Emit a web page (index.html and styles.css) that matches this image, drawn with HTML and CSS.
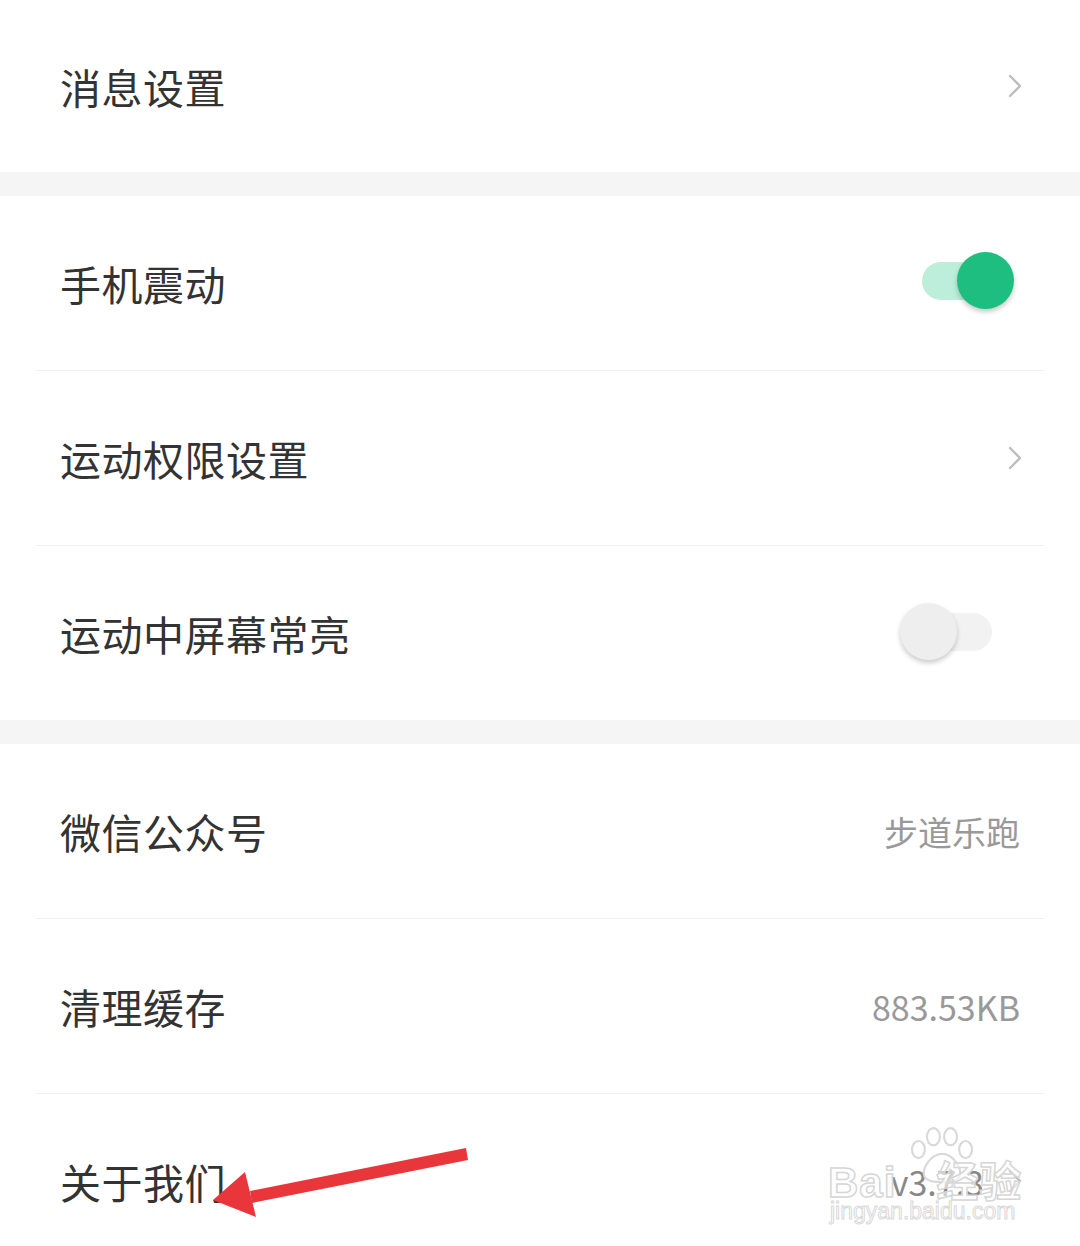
FILE: index.html
```html
<!DOCTYPE html>
<html lang="zh-CN">
<head>
  <meta charset="UTF-8">
  <meta name="viewport" content="width=device-width, initial-scale=1.0">
  <title>设置</title>
  <link rel="stylesheet" href="styles.css">
</head>
<body>

  <!-- 第一组 -->
  <div class="group">
    <div class="row row-first">
      <span class="label">消息设置</span>
      <svg class="chevron" viewBox="0 0 14 24"><path d="M2 2 L12 12 L2 22"/></svg>
    </div>
  </div>

  <div class="gap"></div>

  <!-- 第二组 -->
  <div class="group">
    <div class="row">
      <span class="label">手机震动</span>
      <div class="switch on"><span class="track"></span><span class="knob"></span></div>
    </div>
    <div class="row">
      <span class="label">运动权限设置</span>
      <svg class="chevron" viewBox="0 0 14 24"><path d="M2 2 L12 12 L2 22"/></svg>
    </div>
    <div class="row">
      <span class="label">运动中屏幕常亮</span>
      <div class="switch off"><span class="track"></span><span class="knob"></span></div>
    </div>
  </div>

  <div class="gap"></div>

  <!-- 第三组 -->
  <div class="group">
    <div class="row">
      <span class="label">微信公众号</span>
      <span class="value">步道乐跑</span>
    </div>
    <div class="row">
      <span class="label">清理缓存</span>
      <span class="value">883.53KB</span>
    </div>
    <div class="row">
      <span class="label">关于我们</span>
      <span class="value version">v3.7.3</span>
      <svg class="chevron" viewBox="0 0 14 24"><path d="M2 2 L12 12 L2 22"/></svg>
    </div>
  </div>

  <!-- 标注箭头 -->
  <svg class="arrow" width="1080" height="1246" viewBox="0 0 1080 1246">
    <path d="M466 1148 L468 1160 L252 1203 L250 1191 Z" fill="#e9363b"/>
    <path d="M213 1200 L245 1172 L256 1217 Z" fill="#e9363b"/>
  </svg>

  <!-- 水印 -->
  <div class="watermark">
    <svg class="paw" width="72" height="60" viewBox="0 0 64 56">
      <ellipse cx="10" cy="22" rx="6" ry="8"/>
      <ellipse cx="24" cy="10" rx="6" ry="8"/>
      <ellipse cx="40" cy="10" rx="6" ry="8"/>
      <ellipse cx="54" cy="22" rx="6" ry="8"/>
      <path d="M32 26 C22 26 12 40 16 48 C20 54 44 54 48 48 C52 40 42 26 32 26 Z"/>
    </svg>
    <div class="wm-top">Bai<span class="wm-gap"></span>经验</div>
    <div class="wm-url">jingyan.baidu.com</div>
  </div>

</body>
</html>
```

FILE: styles.css
```css
body {
  margin: 0;
  background: #fff;
  font-family: "Noto Sans CJK SC", "Noto Sans", sans-serif;
  color: #333;
  position: relative;
  height: 1246px;
  overflow: hidden;
}

.group {
  background: #fff;
}

.row {
  display: flex;
  align-items: center;
  height: 174px;
  padding: 0 58px 0 60px;
  position: relative;
}

.row + .row {
  border-top: 1px solid #f0f0f0;
  margin: 0 36px;
  padding: 0 22px 0 24px;
}

.row-first {
  height: 172px;
}

.label {
  flex: 1;
  font-size: 41px;
  letter-spacing: 0.5px;
  color: #333;
}

.value {
  font-size: 34px;
  color: #999;
  margin-right: 2px;
}

.version {
  color: #888;
  margin-right: 24px;
}

.chevron {
  width: 14px;
  height: 24px;
  fill: none;
  stroke: #bdbdbd;
  stroke-width: 2.4;
  stroke-linecap: round;
  stroke-linejoin: round;
}

.gap {
  height: 24px;
  background: #f5f5f5;
}

/* 开关 */
.switch {
  position: relative;
  width: 92px;
  height: 58px;
}

.switch .track {
  position: absolute;
  top: 10px;
  height: 38px;
  border-radius: 19px;
}

.switch .knob {
  position: absolute;
  top: 0;
  width: 57px;
  height: 57px;
  border-radius: 50%;
}

.switch.on {
  margin-right: 8px;
  margin-top: -4px;
}

.switch.on .track {
  left: 0;
  width: 70px;
  background: #bdeedb;
}

.switch.on .knob {
  right: 0;
  background: #1dbe7f;
  box-shadow: 0 3px 5px rgba(0, 0, 0, 0.22);
}

.switch.off {
  margin-right: 30px;
  margin-top: -2px;
}

.switch.off .track {
  right: 0;
  width: 70px;
  background: #f2f2f2;
}

.switch.off .knob {
  left: 0;
  background: #eeeeee;
  box-shadow: 0 3px 5px rgba(0, 0, 0, 0.2);
}

/* 箭头和水印 */
.arrow {
  position: absolute;
  left: 0;
  top: 0;
  pointer-events: none;
}

.watermark {
  position: absolute;
  left: 828px;
  top: 1126px;
  width: 200px;
  font-family: "Liberation Sans", Arial, "Noto Sans CJK SC", sans-serif;
  pointer-events: none;
}

.paw {
  position: absolute;
  left: 78px;
  top: 0;
  fill: none;
  stroke: #d9d9d9;
  stroke-width: 2;
}

.wm-top {
  position: absolute;
  left: 0;
  top: 22px;
  font-size: 44px;
  font-weight: bold;
  letter-spacing: 1px;
  color: rgba(255, 255, 255, 0.6);
  -webkit-text-stroke: 1.5px #d6d6d6;
  white-space: nowrap;
}

.wm-gap {
  display: inline-block;
  width: 40px;
}

.wm-top {
  font-size: 42px;
}

.wm-url {
  position: absolute;
  left: 2px;
  top: 72px;
  font-size: 23px;
  color: rgba(255, 255, 255, 0.6);
  -webkit-text-stroke: 1px #d9d9d9;
  white-space: nowrap;
}
```
